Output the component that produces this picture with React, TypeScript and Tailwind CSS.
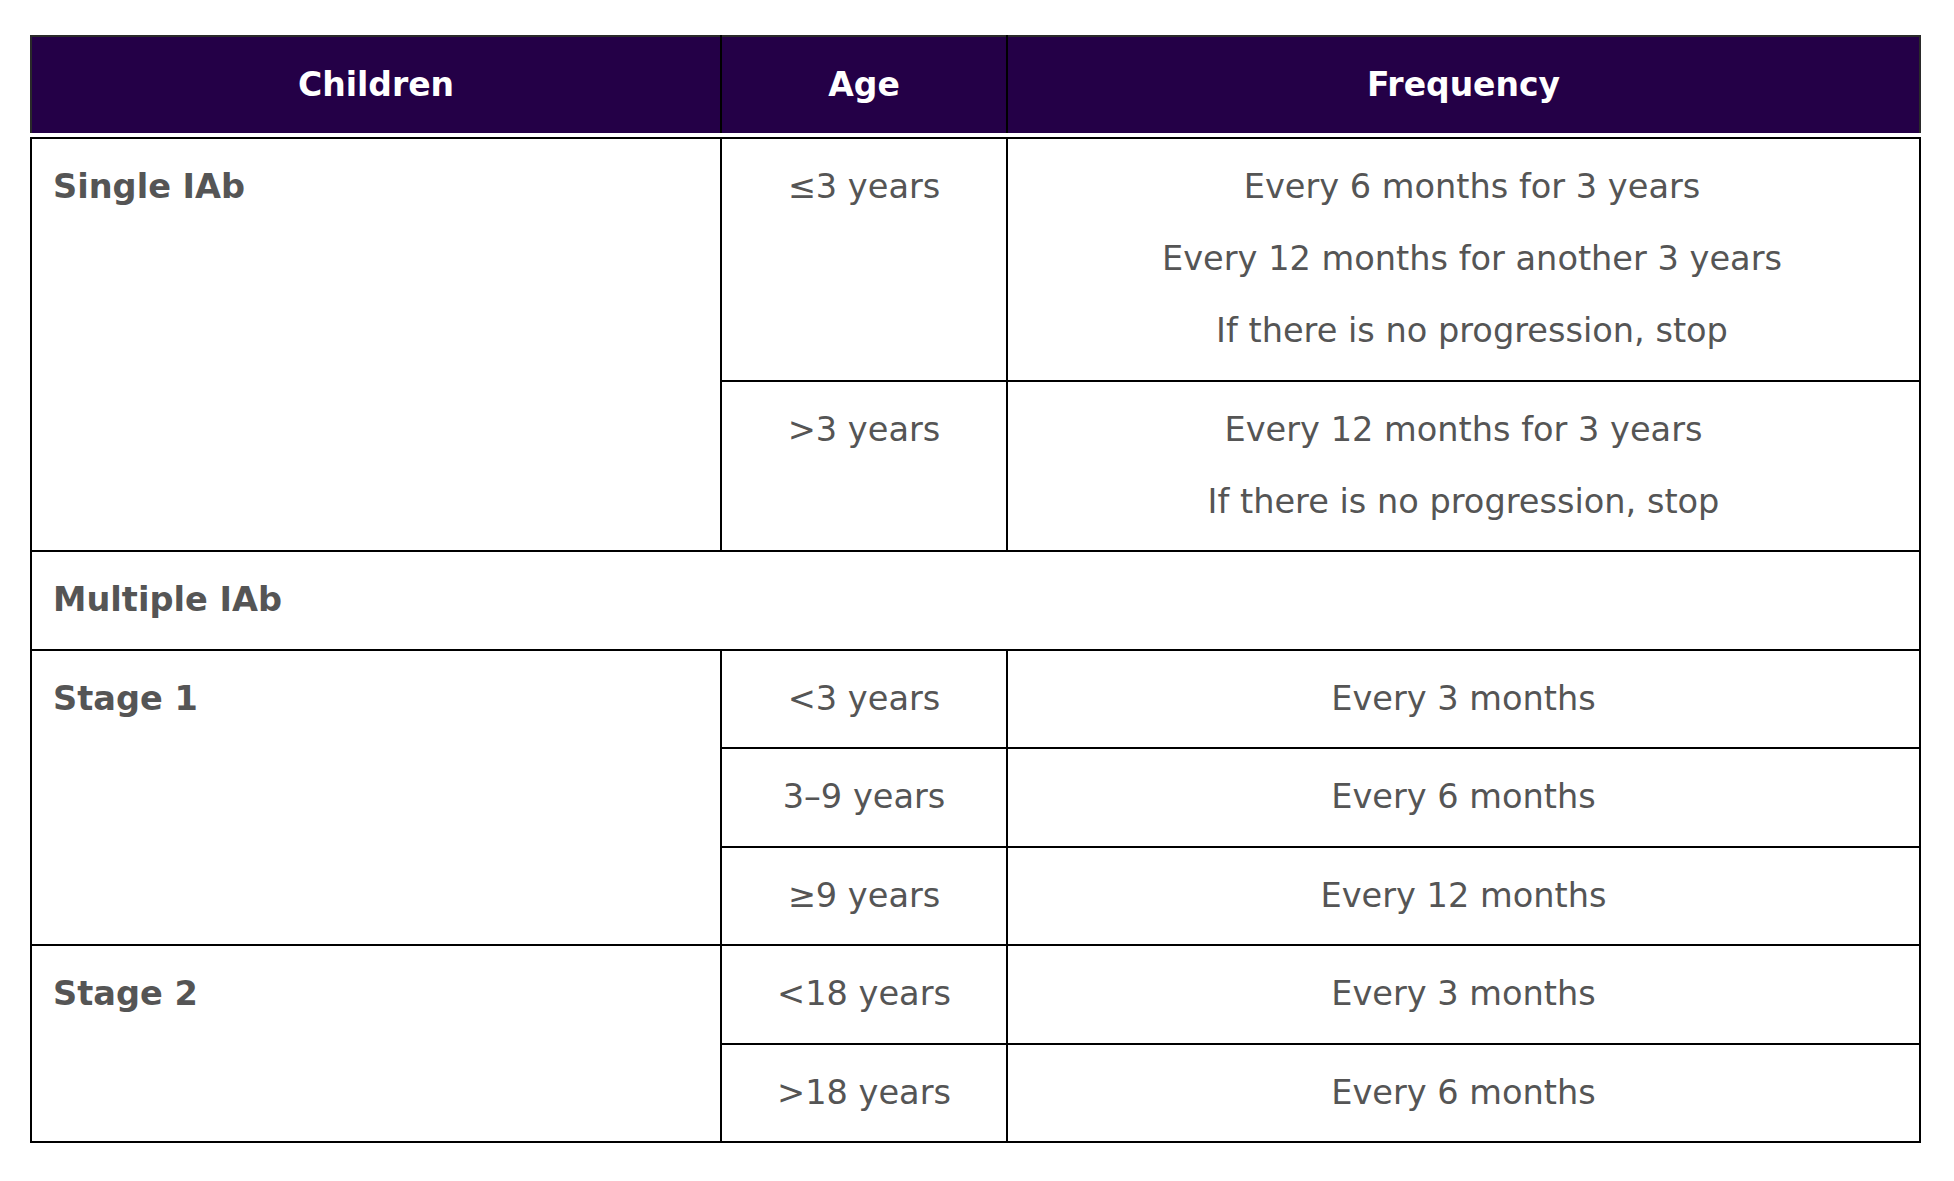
import React from 'react';

const font = { fontFamily: '"DejaVu Sans", Verdana, sans-serif' };

function Lines({ items, className = '' }: { items: string[]; className?: string }) {
  return (
    <div className={`flex flex-col gap-[24px] ${className}`}>
      {items.map((t) => (
        <p key={t} className="leading-[48px]">
          {t}
        </p>
      ))}
    </div>
  );
}

const cellBase = 'border-2 border-black align-top pt-[24px] pb-[24.5px] text-[33.6px] text-[#555555]';
const labelCell = `${cellBase} pl-[21px] pr-4 text-left font-bold`;
const centerCell = `${cellBase} px-4 text-center`;

function Cols() {
  return (
    <colgroup>
      <col className="w-[690px]" />
      <col className="w-[286px]" />
      <col className="w-[913px]" />
    </colgroup>
  );
}

export default function App() {
  return (
    <div className="min-h-screen bg-white pl-[30px] pt-[35px]" style={font}>
      <table className="w-[1889px] table-fixed border-collapse">
        <Cols />
        <thead>
          <tr className="bg-[#240047]">
            <th className="h-[97px] border-2 border-b-0 border-[#2a2a2a] border-r-black text-[33px] font-bold text-white">Children</th>
            <th className="h-[97px] border-2 border-b-0 border-black border-t-[#2a2a2a] text-[33px] font-bold text-white">Age</th>
            <th className="h-[97px] border-2 border-b-0 border-[#2a2a2a] border-l-black text-[33px] font-bold text-white">Frequency</th>
          </tr>
        </thead>
      </table>

      <table className="mt-[4px] w-[1889px] table-fixed border-collapse">
        <Cols />
        <tbody>
          <tr>
            <td rowSpan={2} className={labelCell}>
              <p className="leading-[48px]">Single IAb</p>
            </td>
            <td className={centerCell}>
              <p className="leading-[48px]">≤3 years</p>
            </td>
            <td className={centerCell}>
              <Lines
                className="pl-[17px]"
                items={[
                  'Every 6 months for 3 years',
                  'Every 12 months for another 3 years',
                  'If there is no progression, stop',
                ]}
              />
            </td>
          </tr>
          <tr>
            <td className={centerCell}>
              <p className="leading-[48px]">&gt;3 years</p>
            </td>
            <td className={centerCell}>
              <Lines items={['Every 12 months for 3 years', 'If there is no progression, stop']} />
            </td>
          </tr>
          <tr>
            <td colSpan={3} className={labelCell}>
              <p className="leading-[48px]">Multiple IAb</p>
            </td>
          </tr>
          <tr>
            <td rowSpan={3} className={labelCell}>
              <p className="leading-[48px]">Stage 1</p>
            </td>
            <td className={centerCell}>
              <p className="leading-[48px]">&lt;3 years</p>
            </td>
            <td className={centerCell}>
              <p className="leading-[48px]">Every 3 months</p>
            </td>
          </tr>
          <tr>
            <td className={centerCell}>
              <p className="leading-[48px]">3–9 years</p>
            </td>
            <td className={centerCell}>
              <p className="leading-[48px]">Every 6 months</p>
            </td>
          </tr>
          <tr>
            <td className={centerCell}>
              <p className="leading-[48px]">≥9 years</p>
            </td>
            <td className={centerCell}>
              <p className="leading-[48px]">Every 12 months</p>
            </td>
          </tr>
          <tr>
            <td rowSpan={2} className={labelCell}>
              <p className="leading-[48px]">Stage 2</p>
            </td>
            <td className={centerCell}>
              <p className="leading-[48px]">&lt;18 years</p>
            </td>
            <td className={centerCell}>
              <p className="leading-[48px]">Every 3 months</p>
            </td>
          </tr>
          <tr>
            <td className={centerCell}>
              <p className="leading-[48px]">&gt;18 years</p>
            </td>
            <td className={centerCell}>
              <p className="leading-[48px]">Every 6 months</p>
            </td>
          </tr>
        </tbody>
      </table>
    </div>
  );
}
